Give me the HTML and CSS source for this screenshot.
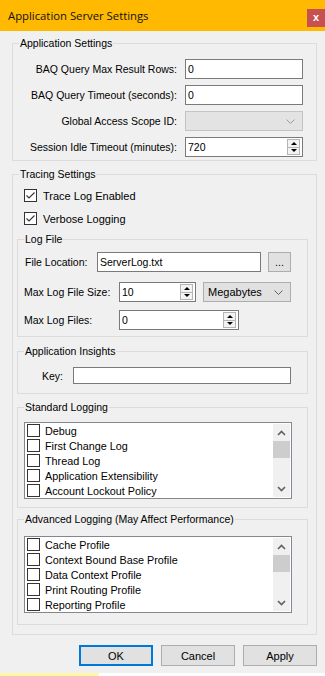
FILE: index.html
```html
<!DOCTYPE html>
<html lang="en">
<head>
    <meta charset="UTF-8">
    <meta name="viewport" content="width=device-width, initial-scale=1.0">
    <title>Application Server Settings</title>
    <link rel="stylesheet" href="styles.css">
</head>
<body>
    <div class="window">
        <div class="titlebar">
            <span class="title">Application Server Settings</span>
            <span class="close">x</span>
        </div>

        <div class="dialog">
            <fieldset class="group app-settings">
                <legend>Application Settings</legend>
                <div class="form-grid">
                    <label>BAQ Query Max Result Rows:</label>
                    <input class="textbox" type="text" value="0">

                    <label>BAQ Query Timeout (seconds):</label>
                    <input class="textbox" type="text" value="0">

                    <label>Global Access Scope ID:</label>
                    <div class="combo disabled">
                        <span></span>
                        <svg class="chevron" width="9" height="5" viewBox="0 0 9 5"><polyline points="0.5,0.5 4.5,4.5 8.5,0.5"/></svg>
                    </div>

                    <label>Session Idle Timeout (minutes):</label>
                    <div class="spin">
                        <input type="text" value="720">
                        <div class="spin-btns"><span class="up"></span><span class="down"></span></div>
                    </div>
                </div>
            </fieldset>

            <fieldset class="group tracing">
                <legend>Tracing Settings</legend>
                <div class="checks">
                    <label class="check">
                        <span class="box"><svg width="11" height="11" viewBox="0 0 11 11"><polyline points="1.5,5.5 4,8 9.5,2.5"/></svg></span>
                        Trace Log Enabled
                    </label>
                    <label class="check">
                        <span class="box"><svg width="11" height="11" viewBox="0 0 11 11"><polyline points="1.5,5.5 4,8 9.5,2.5"/></svg></span>
                        Verbose Logging
                    </label>
                </div>

                <fieldset class="group inner log-file">
                    <legend>Log File</legend>
                    <div class="row">
                        <label class="lbl-file">File Location:</label>
                        <input class="textbox file-path" type="text" value="ServerLog.txt">
                        <button class="btn browse">...</button>
                    </div>
                    <div class="row row-size">
                        <label class="lbl-max">Max Log File Size:</label>
                        <div class="spin size-spin">
                            <input type="text" value="10">
                            <div class="spin-btns"><span class="up"></span><span class="down"></span></div>
                        </div>
                        <div class="combo units">
                            <span>Megabytes</span>
                            <svg class="chevron" width="9" height="5" viewBox="0 0 9 5"><polyline points="0.5,0.5 4.5,4.5 8.5,0.5"/></svg>
                        </div>
                    </div>
                    <div class="row row-files">
                        <label class="lbl-max">Max Log Files:</label>
                        <div class="spin files-spin">
                            <input type="text" value="0">
                            <div class="spin-btns"><span class="up"></span><span class="down"></span></div>
                        </div>
                    </div>
                </fieldset>

                <fieldset class="group inner insights">
                    <legend>Application Insights</legend>
                    <div class="row">
                        <label class="lbl-key">Key:</label>
                        <input class="textbox key-input" type="text" value="">
                    </div>
                </fieldset>

                <fieldset class="group inner std-logging">
                    <legend>Standard Logging</legend>
                    <div class="listbox">
                        <ul class="items">
                            <li><span class="box"></span>Debug</li>
                            <li><span class="box"></span>First Change Log</li>
                            <li><span class="box"></span>Thread Log</li>
                            <li><span class="box"></span>Application Extensibility</li>
                            <li><span class="box"></span>Account Lockout Policy</li>
                        </ul>
                        <div class="scrollbar">
                            <svg class="arrow" width="9" height="6" viewBox="0 0 9 6"><polyline points="1,5 4.5,1.5 8,5"/></svg>
                            <div class="thumb"></div>
                            <svg class="arrow down" width="9" height="6" viewBox="0 0 9 6"><polyline points="1,1 4.5,4.5 8,1"/></svg>
                        </div>
                    </div>
                </fieldset>

                <fieldset class="group inner adv-logging">
                    <legend>Advanced Logging (May Affect Performance)</legend>
                    <div class="listbox">
                        <ul class="items">
                            <li><span class="box"></span>Cache Profile</li>
                            <li><span class="box"></span>Context Bound Base Profile</li>
                            <li><span class="box"></span>Data Context Profile</li>
                            <li><span class="box"></span>Print Routing Profile</li>
                            <li><span class="box"></span>Reporting Profile</li>
                        </ul>
                        <div class="scrollbar">
                            <svg class="arrow" width="9" height="6" viewBox="0 0 9 6"><polyline points="1,5 4.5,1.5 8,5"/></svg>
                            <div class="thumb"></div>
                            <svg class="arrow down" width="9" height="6" viewBox="0 0 9 6"><polyline points="1,1 4.5,4.5 8,1"/></svg>
                        </div>
                    </div>
                </fieldset>
            </fieldset>

            <div class="actions">
                <button class="btn btn-default">OK</button>
                <button class="btn">Cancel</button>
                <button class="btn">Apply</button>
            </div>
        </div>

        <div class="taskbar"><span class="taskbar-item"></span></div>
    </div>
</body>
</html>
```

FILE: styles.css
```css
* {
    margin: 0;
    padding: 0;
    box-sizing: border-box;
}

body {
    width: 325px;
    height: 676px;
    overflow: hidden;
    background: #fff;
    font-family: "Liberation Sans", Arial, sans-serif;
    font-size: 10.5px;
    color: #000;
}

.window {
    height: 676px;
    display: flex;
    flex-direction: column;
    background: #f0f0f0;
}

.titlebar {
    height: 31px;
    flex: none;
    display: flex;
    align-items: center;
    padding-left: 8px;
    background: #ffb900;
}

.title {
    font-family: "Open Sans", sans-serif;
    font-size: 11.3px;
    color: #111;
}

.close {
    margin-left: auto;
    align-self: flex-start;
    margin-top: 9px;
    width: 18px;
    height: 18px;
    background: #c75050;
    color: #fff;
    font-weight: bold;
    font-size: 11px;
    line-height: 16px;
    text-align: center;
}

.dialog {
    padding: 0 8px 0 12px;
}

/* group boxes */
.group {
    border: 1px solid #dcdcdc;
    min-width: 0;
}

.group legend {
    margin-left: 6px;
    padding: 0 1px;
    line-height: 13px;
}

.app-settings {
    margin-top: 6px;
    padding: 9px 13px 3px 0;
}

.form-grid {
    display: grid;
    grid-template-columns: 1fr 118px;
    column-gap: 8px;
    row-gap: 6px;
    align-items: center;
}

.form-grid label {
    text-align: right;
}

.textbox,
.spin input {
    height: 20px;
    border: 1px solid #7a7a7a;
    background: #fff;
    padding: 0 2px;
    font: 10.5px "Liberation Sans", Arial, sans-serif;
    color: #000;
    outline: none;
}

.combo {
    height: 20px;
    display: flex;
    align-items: center;
    justify-content: space-between;
    border: 1px solid #adadad;
    background: #e1e1e1;
    padding: 0 7px 0 4px;
}

.combo.disabled {
    border-color: #c4c4c4;
    background: #e3e3e3;
}

.chevron polyline {
    fill: none;
    stroke: #606060;
    stroke-width: 1;
}

.combo.disabled .chevron polyline {
    stroke: #9a9a9a;
}

.spin {
    height: 20px;
    display: flex;
    align-items: stretch;
    border: 1px solid #7a7a7a;
    background: #fff;
}

.spin input {
    flex: 1;
    min-width: 0;
    height: 18px;
    border: none;
}

.spin-btns {
    width: 13px;
    margin: 1px 2px 1px 0;
    display: flex;
    flex-direction: column;
    border: 1px solid #b4b4b4;
    background: #f3f3f3;
}

.spin-btns span {
    flex: 1;
    display: flex;
    align-items: center;
    justify-content: center;
}

.spin-btns span + span {
    border-top: 1px solid #b4b4b4;
}

.spin-btns .up::after,
.spin-btns .down::after {
    content: "";
    border-left: 3px solid transparent;
    border-right: 3px solid transparent;
}

.spin-btns .up::after {
    border-bottom: 3px solid #000;
}

.spin-btns .down::after {
    border-top: 3px solid #000;
}

/* tracing */
.tracing {
    margin-top: 7px;
    padding: 8px 8px 9px 0;
}

.checks {
    display: flex;
    flex-direction: column;
    gap: 10px;
    margin-left: 11px;
}

.check {
    height: 13px;
    display: flex;
    align-items: center;
    gap: 6px;
    font-size: 11px;
}

.box {
    width: 13px;
    height: 13px;
    flex: none;
    display: flex;
    align-items: center;
    justify-content: center;
    border: 1px solid #333;
    background: #fff;
}

.box polyline {
    fill: none;
    stroke: #333;
    stroke-width: 1.1;
}

.inner {
    margin-left: 4px;
}

.log-file {
    margin-top: 8px;
    padding: 6px 0 6px 0;
}

.row {
    display: flex;
    align-items: center;
}

.log-file .row {
    padding-left: 6px;
}

.row-size {
    margin-top: 10px;
}

.row-files {
    margin-top: 8px;
}

.lbl-file {
    width: 73px;
    padding-left: 1px;
}

.lbl-max {
    width: 95px;
}

.file-path {
    width: 164px;
}

.btn {
    height: 21px;
    border: 1px solid #adadad;
    background: #e1e1e1;
    font: 10.5px "Liberation Sans", Arial, sans-serif;
    color: #000;
}

.browse {
    width: 23px;
    height: 20px;
    margin-left: 7px;
    line-height: 14px;
}

.size-spin {
    width: 77px;
}

.units {
    width: 88px;
    margin-left: 7px;
    padding-left: 4px;
    font-size: 11px;
}

.files-spin {
    width: 120px;
}

.insights {
    margin-top: 8px;
    padding: 9px 0 9px 24px;
}

.insights legend {
    margin-left: -18px;
}

.lbl-key {
    width: 31px;
}

.key-input {
    width: 218px;
    height: 17px;
}

.std-logging {
    margin-top: 7px;
    padding: 8px 0 8px 6px;
}

.adv-logging {
    margin-top: 5px;
    padding: 10px 0 11px 6px;
}

.std-logging legend,
.adv-logging legend {
    margin-left: 0;
}

/* checked list boxes */
.listbox {
    width: 268px;
    height: 77px;
    display: flex;
    border: 1px solid #828790;
    background: #fff;
}

.items {
    flex: 1;
    list-style: none;
    padding: 0 0 0 2px;
    overflow: hidden;
}

.items li {
    height: 15px;
    display: flex;
    align-items: center;
    gap: 5px;
    font-size: 10.8px;
    white-space: nowrap;
}

.items .box {
    width: 13px;
    height: 13px;
}

.scrollbar {
    width: 17px;
    margin: 1px 1px 1px 0;
    display: flex;
    flex-direction: column;
    align-items: center;
    background: #f0f0f0;
}

.scrollbar .arrow {
    margin: 6px 0 5px;
    flex: none;
}

.scrollbar .arrow.down {
    margin-top: auto;
    margin-bottom: 5px;
}

.arrow polyline {
    fill: none;
    stroke: #606060;
    stroke-width: 1.6;
}

.thumb {
    width: 17px;
    height: 17px;
    background: #cdcdcd;
}

/* dialog buttons */
.actions {
    margin-top: 10px;
    display: flex;
    justify-content: flex-end;
    gap: 8px;
}

.actions .btn {
    width: 74px;
    font-size: 11px;
}

.btn-default {
    border: 2px solid #0078d7;
}

.taskbar {
    margin-top: auto;
    height: 3px;
    flex: none;
    background: #fff;
}

.taskbar-item {
    display: block;
    width: 99px;
    height: 3px;
    background: #fff8a6;
}
```
